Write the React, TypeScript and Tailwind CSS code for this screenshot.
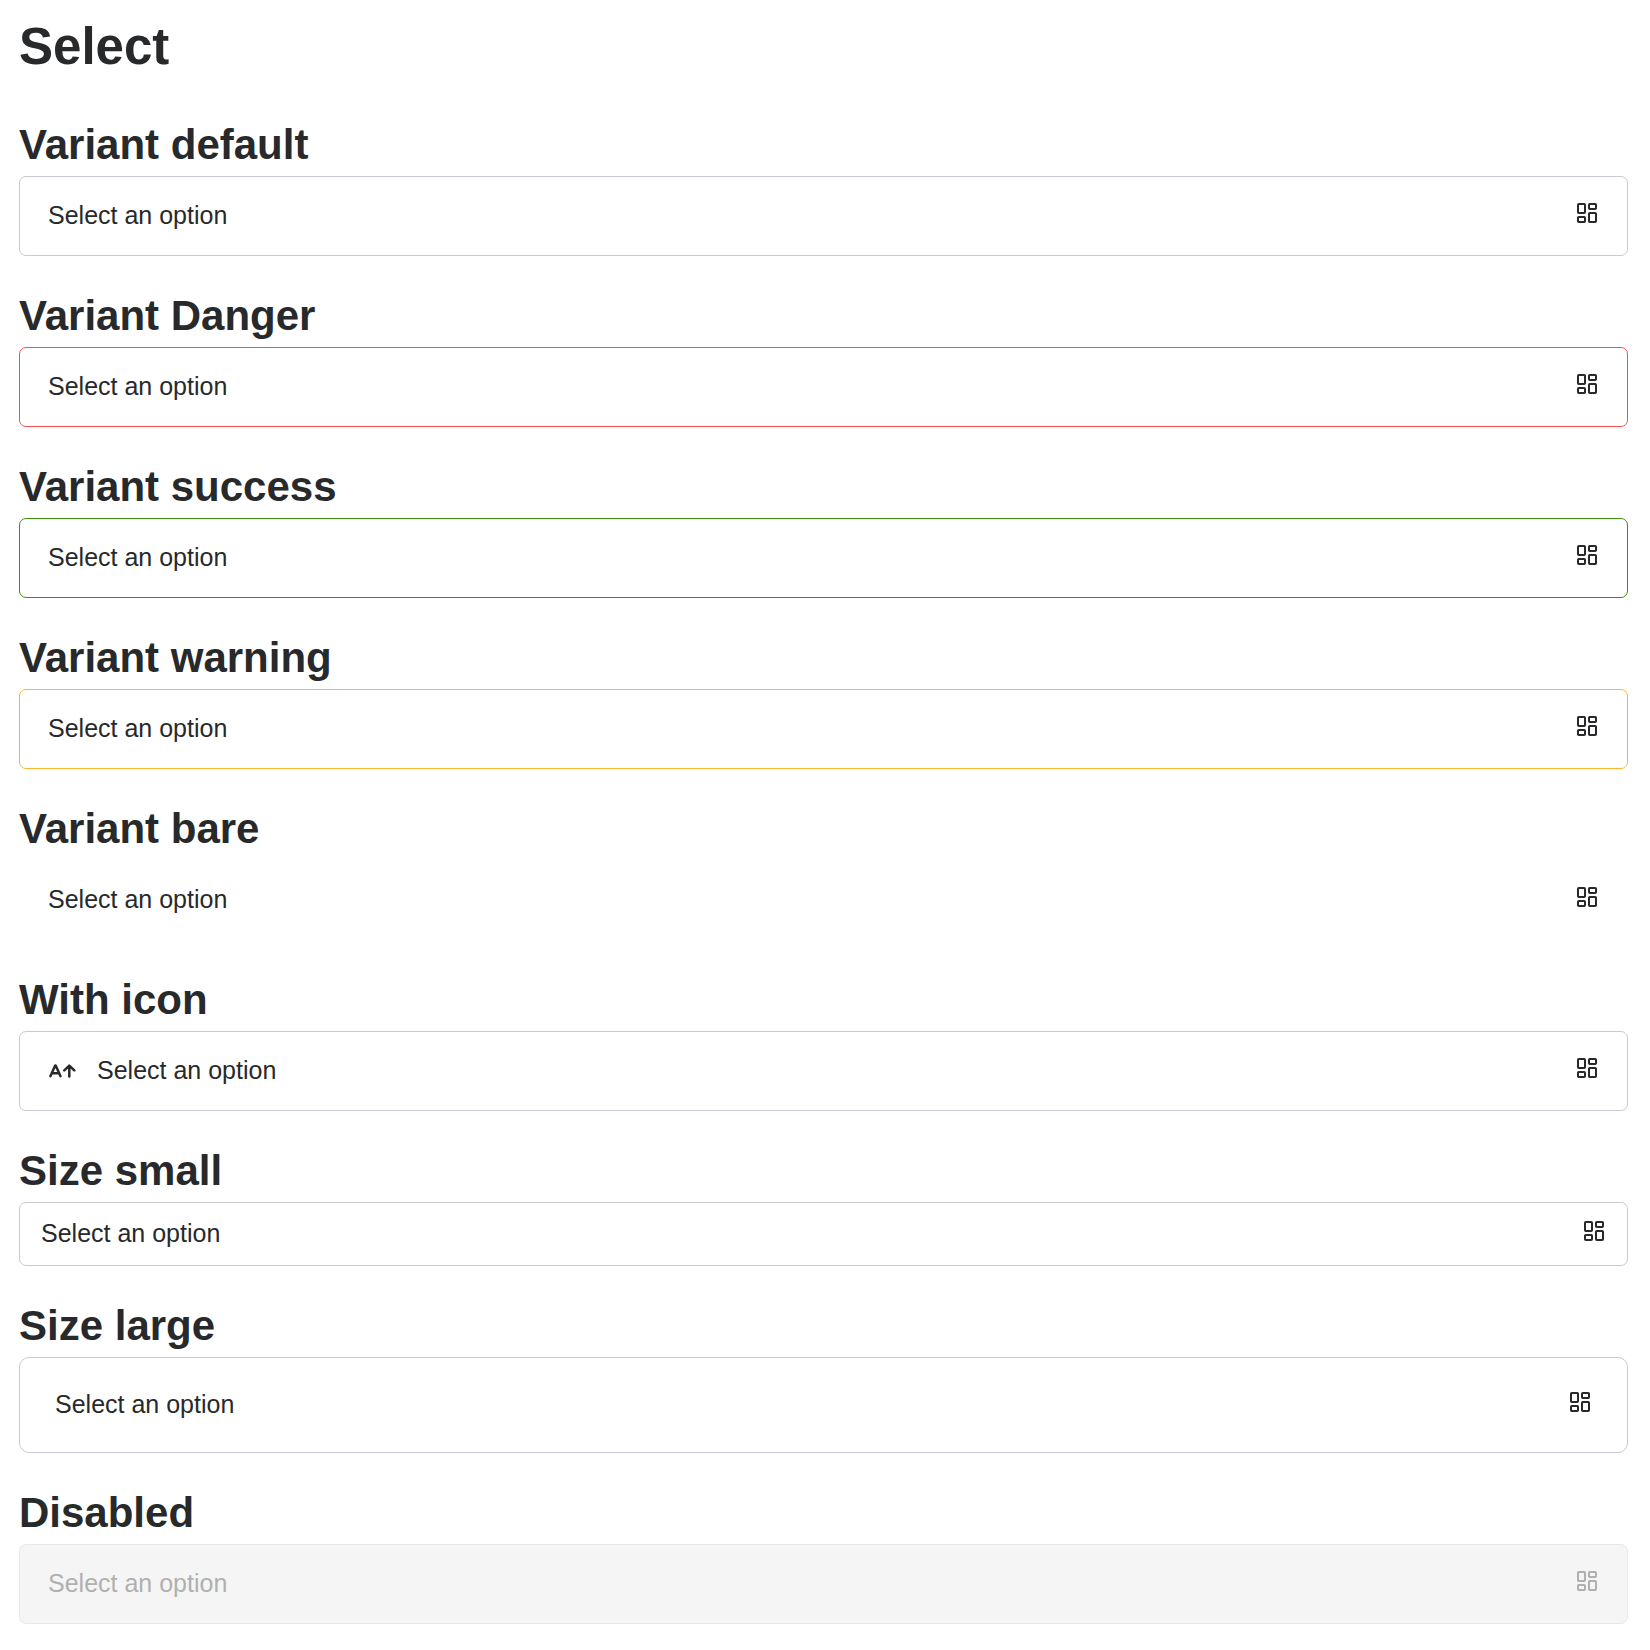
import React, { useId } from "react";

const TilesIcon = ({ className }: { className: string }) => (
  <svg
    aria-hidden="true"
    viewBox="0 0 20 20"
    className={`pointer-events-none h-5 w-5 self-center justify-self-end [grid-area:1/1] ${className}`}
    fill="none"
    stroke="currentColor"
    strokeWidth="2"
  >
    <rect x="1" y="1" width="7" height="9" rx="0.8" />
    <rect x="12" y="1" width="7" height="5" rx="0.8" />
    <rect x="1" y="14" width="7" height="5" rx="0.8" />
    <rect x="12" y="10" width="7" height="9" rx="0.8" />
  </svg>
);

const FontIncreaseIcon = () => (
  <svg
    aria-hidden="true"
    viewBox="0 0 28 14"
    className="pointer-events-none ml-[30px] h-3.5 w-7 self-center justify-self-start [grid-area:1/1]"
    fill="none"
    stroke="currentColor"
    strokeWidth="2.5"
    strokeLinecap="round"
    strokeLinejoin="round"
  >
    <path d="M1.4 12.2 6.2 1.6h.5l4.8 10.6M3.2 9.2h6.6M20.3 12.4V1.8M15.3 6.4l5-4.8 5 4.8" />
  </svg>
);

const sizes = {
  small: { box: "h-16 rounded-[7px] pl-[21px]", icon: "mr-6 mb-[6px]" },
  medium: { box: "h-20 rounded-[7px] pl-7", icon: "mr-[31px] mb-[6px]" },
  large: { box: "h-24 rounded-[10px] pl-[35px]", icon: "mr-[38px] mb-[6px]" },
};

type FieldProps = {
  title: string;
  border?: string;
  size?: keyof typeof sizes;
  withIcon?: boolean;
  disabled?: boolean;
};

function SelectField({ title, border = "border-[#c9c8d3]", size = "medium", withIcon, disabled }: FieldProps) {
  const id = useId();
  const s = sizes[size];
  const box = withIcon ? "h-20 rounded-[7px] pl-[77px]" : s.box;
  return (
    <section className="mb-8">
      <h2 className="mb-1 text-[42px] leading-[55px] font-bold">
        <label htmlFor={id}>{title}</label>
      </h2>
      <div className={`grid ${disabled ? "text-[#b0b0b0]" : ""}`}>
        <select
          id={id}
          disabled={disabled}
          className={`w-full appearance-none border pr-16 text-[25px] opacity-100 [grid-area:1/1] ${box} ${border} ${disabled ? "bg-[#f5f5f5]" : "bg-white"}`}
        >
          <option>Select an option</option>
        </select>
        {withIcon && <FontIncreaseIcon />}
        <TilesIcon className={s.icon} />
      </div>
    </section>
  );
}

export default function App() {
  return (
    <main className="pt-3.5 pr-[22px] pl-[19px] font-['Liberation_Sans',Arial,sans-serif] text-[#28292b]">
      <h1 className="mb-[38px] text-[51px] leading-[65px] font-bold">Select</h1>
      <SelectField title="Variant default" />
      <SelectField title="Variant Danger" border="border-[#f94f4f]" />
      <SelectField title="Variant success" border="border-[#3a910f]" />
      <SelectField title="Variant warning" border="border-[#ffb52e]" />
      <SelectField title="Variant bare" border="border-transparent" />
      <SelectField title="With icon" withIcon />
      <SelectField title="Size small" size="small" />
      <SelectField title="Size large" size="large" />
      <SelectField title="Disabled" border="border-[#e8e8e8]" disabled />
    </main>
  );
}
